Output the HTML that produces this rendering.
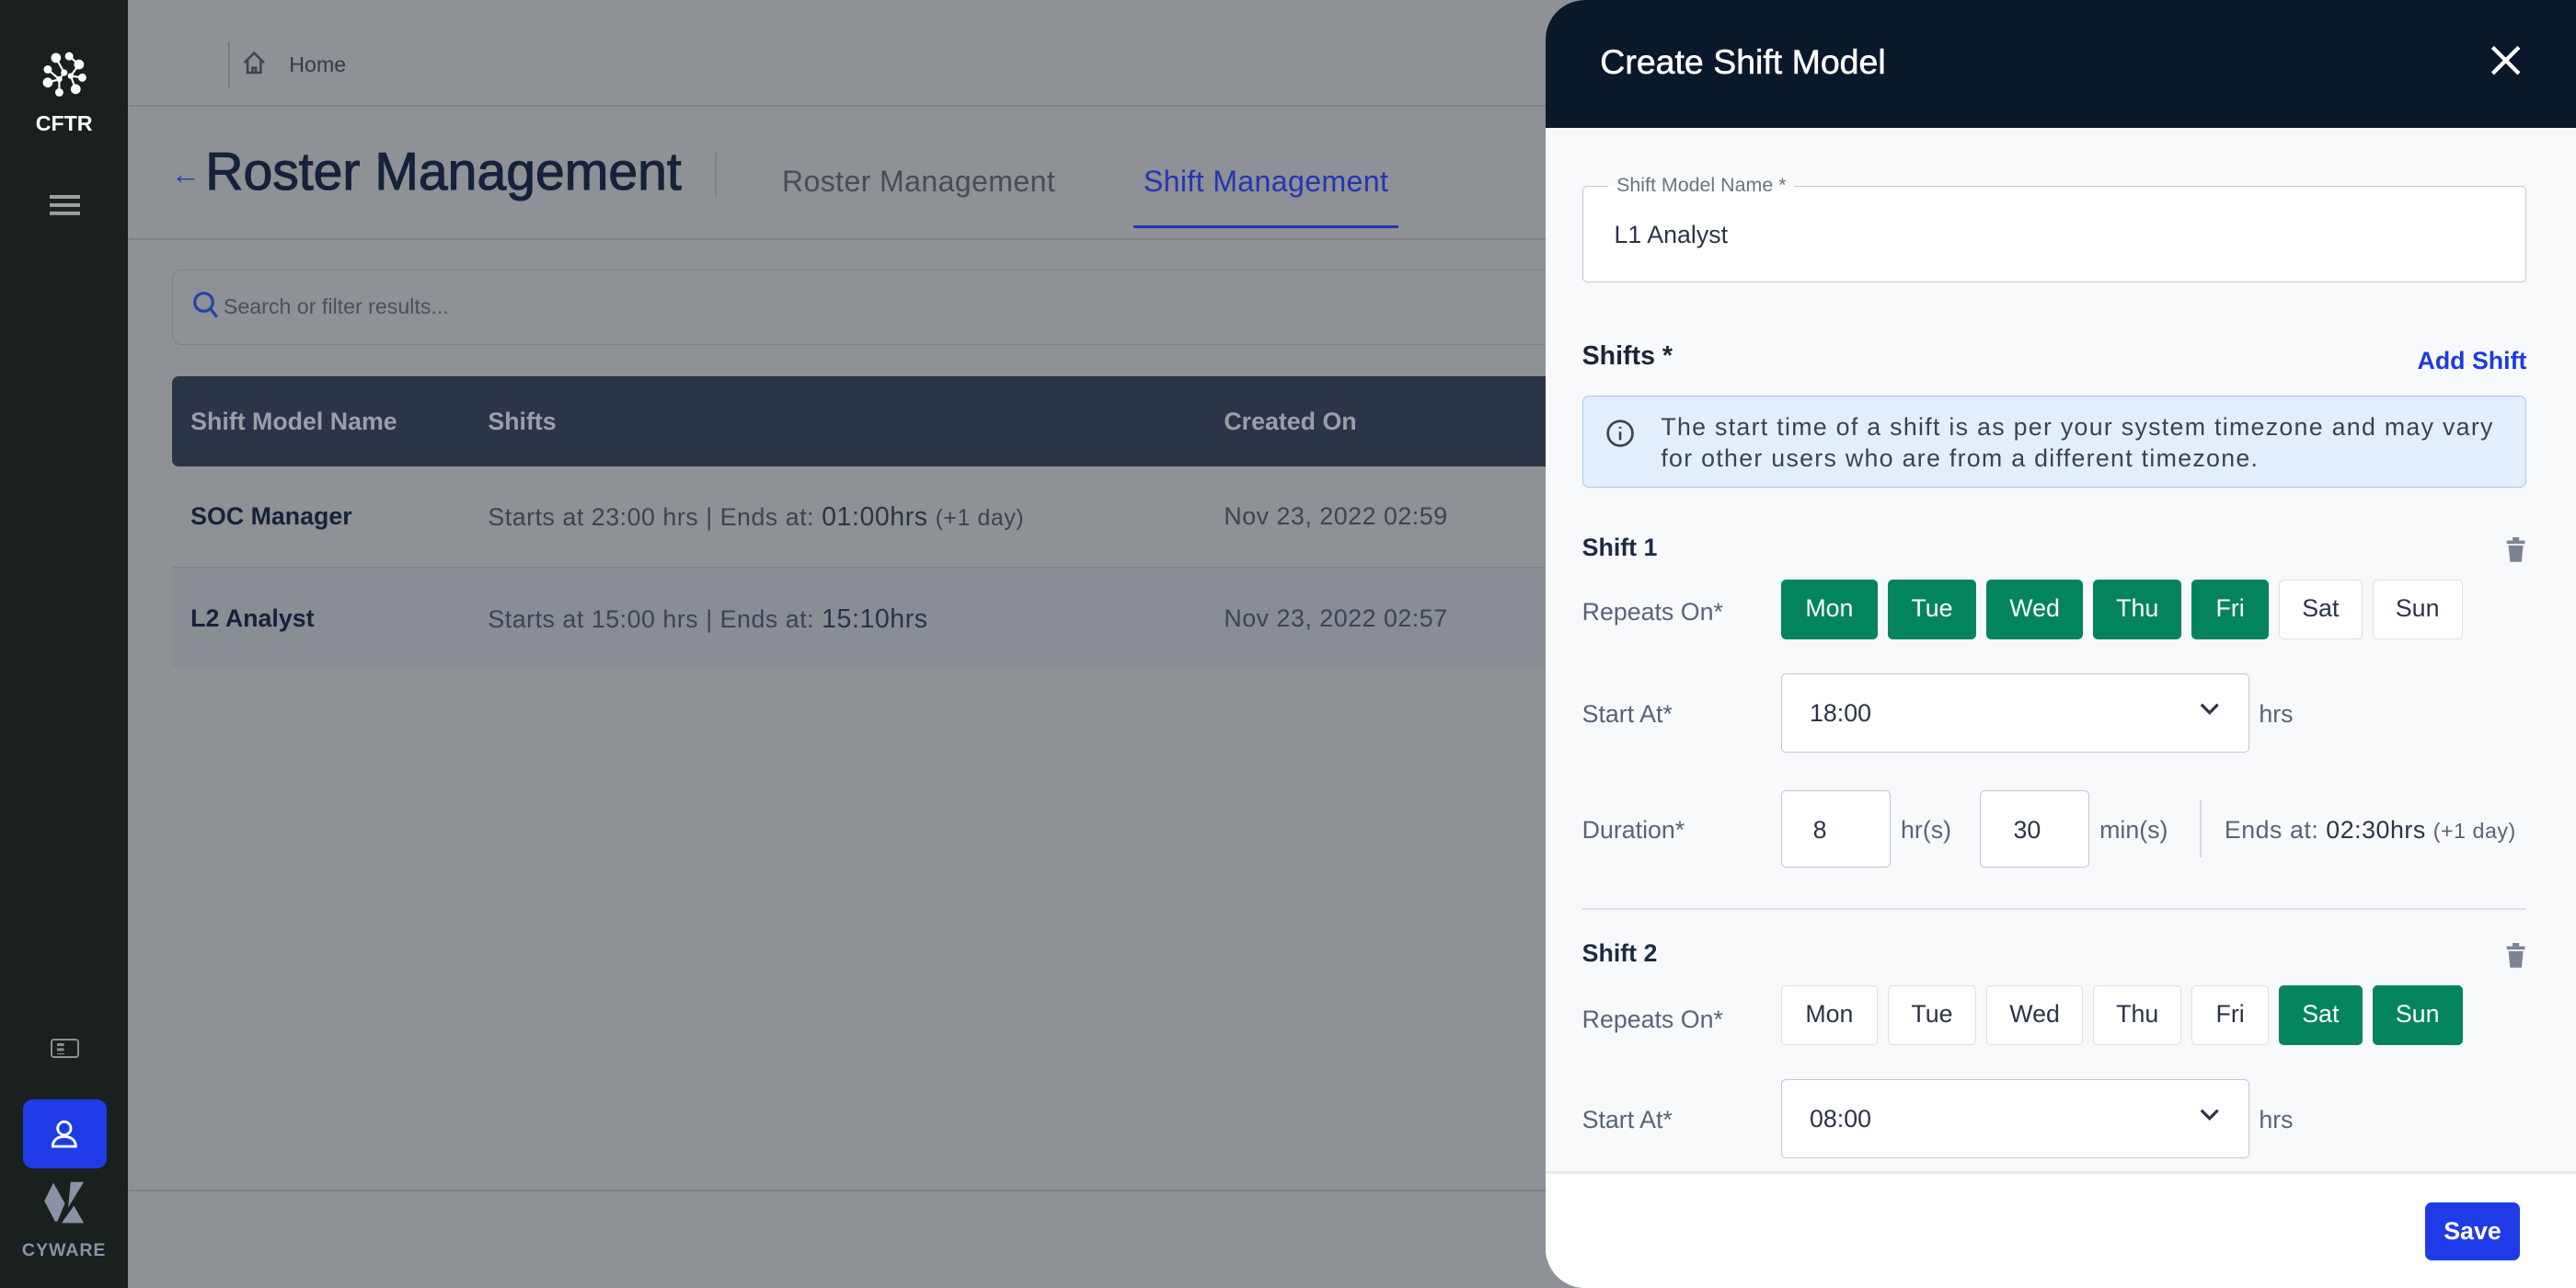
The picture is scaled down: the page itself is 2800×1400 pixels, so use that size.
<!DOCTYPE html>
<html><head><meta charset="utf-8"><style>
*{box-sizing:border-box;margin:0;padding:0}
html,body{width:2800px;height:1400px;overflow:hidden;background:#8e9195}
#w{zoom:1.785714;width:1568px;height:784px;position:relative;font-family:"Liberation Sans",sans-serif;overflow:hidden}
.a{position:absolute;white-space:nowrap}
.side{left:0;top:0;width:78px;height:784px;background:#19201e}
.dr{left:941px;top:0;width:627px;height:784px;background:#f8f9fb;border-radius:24px 0 0 24px;overflow:hidden}
.day{position:absolute;height:36px;border:1px solid #dde1e6;background:#fff;border-radius:3px;font-size:15px;color:#2b3447;text-align:center;line-height:34px}
.on{background:#03845f;border-color:#03845f;color:#fff}
.lbl{font-size:15px;color:#5a6377}
.box{position:absolute;background:#fff;border:1px solid #c3c8d0;border-radius:3px;font-size:15px;color:#2b3447}
</style></head><body><div id="w">
<div class="a side"></div>
<svg class="a" style="left:24px;top:30px" width="30" height="30" viewBox="0 0 30 30" fill="#fff"><circle cx="10" cy="5" r="3"/><circle cx="18" cy="4" r="2.5"/><circle cx="24" cy="9" r="3"/><circle cx="5" cy="12" r="2.5"/><circle cx="26" cy="17" r="2.5"/><circle cx="5" cy="20" r="3"/><circle cx="22" cy="24" r="3"/><circle cx="12" cy="26" r="2.5"/><circle cx="15" cy="14" r="2"/><circle cx="12" cy="18" r="1.8"/><circle cx="19" cy="16" r="1.8"/><path d="M10 5L15 14L12 18L5 20M18 4L24 9L19 16L22 24M5 12L12 18L12 26M26 17L19 16" stroke="#fff" stroke-width="1.2" fill="none"/></svg>
<div class="a" style="left:0;width:78px;text-align:center;top:68px;color:#fff;font-size:13px;font-weight:bold">CFTR</div>
<div class="a" style="left:30px;top:119px;width:19px;height:2px;background:#9aa0a0;box-shadow:0 5px 0 #9aa0a0,0 10px 0 #9aa0a0"></div>
<div class="a" style="left:31px;top:632px;width:17px;height:12px;border:1.5px solid #8a908f;border-radius:2px"></div>
<div class="a" style="left:35px;top:635px;width:2px;height:2px;background:#8a908f;box-shadow:2px 0 0 #8a908f,0 3px 0 #8a908f,2px 3px 0 #8a908f"></div>
<div class="a" style="left:35px;top:641px;width:4px;height:1px;background:#8a908f"></div>
<div class="a" style="left:14px;top:669px;width:51px;height:42px;background:#1f3be8;border-radius:6px"></div>
<svg class="a" style="left:29px;top:680px" width="20" height="20" viewBox="0 0 20 20" fill="none" stroke="#fff" stroke-width="1.6"><circle cx="10" cy="7" r="4"/><path d="M3 18c0-4 3-6 7-6s7 2 7 6z"/></svg>
<svg class="a" style="left:0;top:0" width="78" height="784" viewBox="0 0 78 784" fill="#8a93a6"><path d="M27 731L32.5 720L39.5 732.5L35 743.5H33.5Z"/><path d="M43 719.5H51L41.5 735Z"/><path d="M37.5 744.5H51L45 734Z"/></svg>
<div class="a" style="left:0;width:78px;text-align:center;top:755px;color:#8a93a6;font-size:11px;font-weight:bold;letter-spacing:.5px">CYWARE</div>

<div class="a" style="left:139px;top:25px;width:1px;height:28px;background:#777b80"></div>
<svg class="a" style="left:147px;top:30px" width="16" height="16" viewBox="0 0 16 16" fill="none" stroke="#3c4454" stroke-width="1.4"><path d="M2 8L8 2l6 6M4 6.5V14h8V6.5M7 14v-3h2v3"/></svg>
<div class="a" style="left:176px;top:32px;font-size:13px;color:#333c4c">Home</div>
<div class="a" style="left:78px;top:64px;width:870px;height:1px;background:#7f8388"></div>
<div class="a" style="left:104px;top:96px;font-size:18px;color:#2145a6">←</div>
<div class="a" style="left:125px;top:86px;font-size:32px;color:#16223a;-webkit-text-stroke:0.6px #16223a">Roster Management</div>
<div class="a" style="left:435px;top:93px;width:1px;height:27px;background:#7f8388"></div>
<div class="a" style="left:476px;top:100px;font-size:18px;color:#464d5a;letter-spacing:.2px">Roster Management</div>
<div class="a" style="left:696px;top:100px;font-size:18px;color:#2235b5;letter-spacing:.2px">Shift Management</div>
<div class="a" style="left:690px;top:137px;width:161px;height:2px;background:#2235b5"></div>
<div class="a" style="left:78px;top:145px;width:870px;height:1px;background:#7f8388"></div>
<div class="a" style="left:105px;top:164px;width:900px;height:46px;border:1px solid #7f8388;border-radius:6px"></div>
<svg class="a" style="left:117px;top:177px" width="17" height="19" viewBox="0 0 17 19" fill="none" stroke="#2145a6" stroke-width="1.8"><circle cx="7" cy="7" r="5.5"/><path d="M11 11l4 5"/></svg>
<div class="a" style="left:136px;top:179px;font-size:13px;color:#4a5060">Search or filter results...</div>
<div class="a" style="left:105px;top:229px;width:900px;height:55px;background:#2b3547;border-radius:4px 0 0 4px"></div>
<div class="a" style="top:248px;left:116px;font-size:15px;font-weight:bold;color:#9aa0a8">Shift Model Name</div>
<div class="a" style="top:248px;left:297px;font-size:15px;font-weight:bold;color:#9aa0a8">Shifts</div>
<div class="a" style="top:248px;left:745px;font-size:15px;font-weight:bold;color:#9aa0a8">Created On</div>
<div class="a" style="left:105px;top:345px;width:900px;height:61px;background:#898d94;border-top:1px solid #7f8388"></div>
<div class="a" style="top:306px;left:116px;font-size:15px;font-weight:bold;color:#16223a">SOC Manager</div>
<div class="a" style="top:306px;left:297px;font-size:15px;color:#3c4454;letter-spacing:.3px">Starts at 23:00 hrs | Ends at: <span style="font-size:16px;color:#2b3447">01:00hrs</span> <span style="font-size:14px">(+1 day)</span></div>
<div class="a" style="top:306px;left:745px;font-size:15px;color:#3c4454;letter-spacing:.3px">Nov 23, 2022 02:59</div>
<div class="a" style="top:368px;left:116px;font-size:15px;font-weight:bold;color:#16223a">L2 Analyst</div>
<div class="a" style="top:368px;left:297px;font-size:15px;color:#3c4454;letter-spacing:.3px">Starts at 15:00 hrs | Ends at: <span style="font-size:16px;color:#2b3447">15:10hrs</span></div>
<div class="a" style="top:368px;left:745px;font-size:15px;color:#3c4454;letter-spacing:.3px">Nov 23, 2022 02:57</div>
<div class="a" style="left:78px;top:724px;width:870px;height:1px;background:#7f8388"></div>

<div class="a dr">
<div class="a" style="left:0;top:0;width:627px;height:78px;background:#0a182c"></div>
<div class="a" style="left:33px;top:26px;font-size:21px;color:#fff;-webkit-text-stroke:0.3px #fff">Create Shift Model</div>
<svg class="a" style="left:573px;top:26px" width="22" height="22" viewBox="0 0 22 22" stroke="#fff" stroke-width="2.4"><path d="M3 3l16 16M19 3L3 19"/></svg>
<div class="box" style="left:22px;top:113px;width:575px;height:59px;padding:21px 0 0 19px">L1 Analyst</div>
<div class="a" style="left:38px;top:106px;font-size:12px;color:#6b7384;background:linear-gradient(#f8f9fb 50%,#fff 50%);padding:0 5px">Shift Model Name *</div>
<div class="a" style="left:22px;top:208px;font-size:16px;font-weight:bold;color:#1e2433">Shifts *</div>
<div class="a" style="right:30px;top:211px;font-size:15px;font-weight:bold;color:#1d3be0">Add Shift</div>
<div class="a" style="left:22px;top:241px;width:575px;height:56px;background:#e3eefd;border:1px solid #a9c6f5;border-radius:4px"></div>
<svg class="a" style="left:36px;top:255px" width="18" height="18" viewBox="0 0 18 18" fill="none" stroke="#3a4253" stroke-width="1.5"><circle cx="9" cy="9" r="7.5"/><path d="M9 8v5M9 5v1"/></svg>
<div class="a" style="left:70px;top:251px;font-size:15px;color:#3a4253;line-height:19px;letter-spacing:.72px">The start time of a shift is as per your system timezone and may vary<br>for other users who are from a different timezone.</div>

<div class="a" style="left:22px;top:325px;font-size:15px;font-weight:bold;color:#1e2a44">Shift 1</div>
<svg class="a" style="left:584px;top:327px" width="13" height="15" viewBox="0 0 13 15" fill="#7c8494"><rect x="1" y="2" width="11" height="2"/><rect x="4.5" y="0" width="4" height="2"/><path d="M2 5h9l-1 10H3z"/></svg>
<div class="a lbl" style="left:22px;top:364px">Repeats On*</div>
<div class="day on" style="left:143px;top:353px;width:59px">Mon</div>
<div class="day on" style="left:208px;top:353px;width:54px">Tue</div>
<div class="day on" style="left:268px;top:353px;width:59px">Wed</div>
<div class="day on" style="left:333px;top:353px;width:54px">Thu</div>
<div class="day on" style="left:393px;top:353px;width:47px">Fri</div>
<div class="day" style="left:446px;top:353px;width:51px">Sat</div>
<div class="day" style="left:503px;top:353px;width:55px">Sun</div>
<div class="a lbl" style="left:22px;top:426px">Start At*</div>
<div class="box" style="left:143px;top:410px;width:285px;height:48px;padding:15px 0 0 17px">18:00</div>
<svg class="a" style="left:398px;top:428px" width="12" height="8" viewBox="0 0 12 8" fill="none" stroke="#2b3447" stroke-width="1.8"><path d="M1 1l5 5 5-5"/></svg>
<div class="a lbl" style="left:434px;top:426px">hrs</div>
<div class="a lbl" style="left:22px;top:497px">Duration*</div>
<div class="box" style="left:143px;top:481px;width:67px;height:47px;padding:15px 0 0 19px">8</div>
<div class="a lbl" style="left:216px;top:497px">hr(s)</div>
<div class="box" style="left:264px;top:481px;width:67px;height:47px;padding:15px 0 0 20px">30</div>
<div class="a lbl" style="left:337px;top:497px">min(s)</div>
<div class="a" style="left:398px;top:487px;width:1px;height:35px;background:#d5d9df"></div>
<div class="a lbl" style="left:413px;top:497px;letter-spacing:.3px">Ends at: <span style="color:#2b3447">02:30hrs</span> <span style="font-size:13px">(+1 day)</span></div>
<div class="a" style="left:22px;top:553px;width:575px;height:1px;background:#dde1e6"></div>

<div class="a" style="left:22px;top:572px;font-size:15px;font-weight:bold;color:#1e2a44">Shift 2</div>
<svg class="a" style="left:584px;top:574px" width="13" height="15" viewBox="0 0 13 15" fill="#7c8494"><rect x="1" y="2" width="11" height="2"/><rect x="4.5" y="0" width="4" height="2"/><path d="M2 5h9l-1 10H3z"/></svg>
<div class="a lbl" style="left:22px;top:612px">Repeats On*</div>
<div class="day" style="left:143px;top:600px;width:59px">Mon</div>
<div class="day" style="left:208px;top:600px;width:54px">Tue</div>
<div class="day" style="left:268px;top:600px;width:59px">Wed</div>
<div class="day" style="left:333px;top:600px;width:54px">Thu</div>
<div class="day" style="left:393px;top:600px;width:47px">Fri</div>
<div class="day on" style="left:446px;top:600px;width:51px">Sat</div>
<div class="day on" style="left:503px;top:600px;width:55px">Sun</div>
<div class="a lbl" style="left:22px;top:673px">Start At*</div>
<div class="box" style="left:143px;top:657px;width:285px;height:48px;padding:15px 0 0 17px">08:00</div>
<svg class="a" style="left:398px;top:675px" width="12" height="8" viewBox="0 0 12 8" fill="none" stroke="#2b3447" stroke-width="1.8"><path d="M1 1l5 5 5-5"/></svg>
<div class="a lbl" style="left:434px;top:673px">hrs</div>

<div class="a" style="left:0;top:713px;width:627px;height:71px;background:#fff;border-top:2px solid #e6e9ed"></div>
<div class="a" style="left:535px;top:732px;width:58px;height:35px;background:#1f3be8;border-radius:4px;color:#fff;font-size:15px;font-weight:bold;text-align:center;line-height:35px">Save</div>
</div>
</div></body></html>
